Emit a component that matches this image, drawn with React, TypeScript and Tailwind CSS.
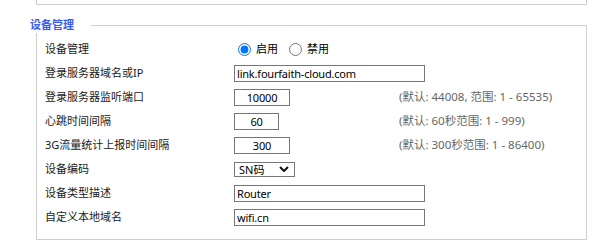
import React from 'react';

const font = { fontFamily: '"Noto Sans", "Noto Sans CJK SC", sans-serif' };

interface RowProps {
  label: string;
  children: React.ReactNode;
  hint?: string;
}

// one settings row: label column, control column, optional gray hint
const Row: React.FC<RowProps> = ({ label, children, hint }) => (
  <div className="grid grid-cols-[189px_165px_1fr] h-[24px] items-center">
    <div className="text-[11px] text-[#1a1a1a]">{label}</div>
    <div className={`flex items-center ${hint ? '' : 'col-span-2'}`}>{children}</div>
    {hint && <div className="text-[11.5px] text-[#666] whitespace-nowrap">{hint}</div>}
  </div>
);

const TextBox: React.FC<{ value: string; width: string; center?: boolean }> = ({ value, width, center }) => (
  <input
    readOnly
    value={value}
    className={`${width} h-[17px] border border-[#767676] bg-white px-[2px] text-[11px] tracking-[-0.2px] text-black outline-none ${center ? 'text-center' : ''}`}
    style={font}
  />
);

export default function App() {
  return (
    <div className="w-[612px] h-[251px] bg-white overflow-hidden" style={font}>
      <div className="ml-[36px] w-[551px] h-[5px] border-l border-r border-b border-[#cfcfcf]" />

      <fieldset className="ml-[36px] mt-[12px] w-[551px] border border-[#cfcfcf]">
        <legend className="-ml-[7px] pr-[17px] bg-white text-[11px] leading-[16px] font-bold text-[#3a5cf5]">
          设备管理
        </legend>
        <div className="pl-[8px] pt-[4px] pb-[10px]">
          <Row label="设备管理">
            <label className="flex items-center ml-[4px]">
              <input type="radio" name="dev" defaultChecked className="w-[13px] h-[13px] accent-[#0075ff]" />
              <span className="ml-[5px] text-[11px] text-black">启用</span>
            </label>
            <label className="flex items-center ml-[11px]">
              <input type="radio" name="dev" className="w-[13px] h-[13px] accent-[#0075ff]" />
              <span className="ml-[5px] text-[11px] text-black">禁用</span>
            </label>
          </Row>
          <Row label="登录服务器域名或IP">
            <TextBox value="link.fourfaith-cloud.com" width="w-[191px]" />
          </Row>
          <Row label="登录服务器监听端口" hint="(默认: 44008, 范围: 1 - 65535)">
            <TextBox value="10000" width="w-[56px]" center />
          </Row>
          <Row label="心跳时间间隔" hint="(默认: 60秒范围: 1 - 999)">
            <TextBox value="60" width="w-[45px]" center />
          </Row>
          <Row label="3G流量统计上报时间间隔" hint="(默认: 300秒范围: 1 - 86400)">
            <TextBox value="300" width="w-[56px]" center />
          </Row>
          <Row label="设备编码">
            <div className="w-[61px] h-[15px] border border-[#767676] flex items-center justify-between pl-[4px] pr-[5px]">
              <span className="text-[11px] text-black leading-none">SN码</span>
              <svg width="10" height="6" viewBox="0 0 10 6">
                <polyline points="1,1 5,5 9,1" fill="none" stroke="#111" strokeWidth="2" />
              </svg>
            </div>
          </Row>
          <Row label="设备类型描述">
            <TextBox value="Router" width="w-[191px]" />
          </Row>
          <Row label="自定义本地域名">
            <TextBox value="wifi.cn" width="w-[191px]" />
          </Row>
        </div>
      </fieldset>
    </div>
  );
}
